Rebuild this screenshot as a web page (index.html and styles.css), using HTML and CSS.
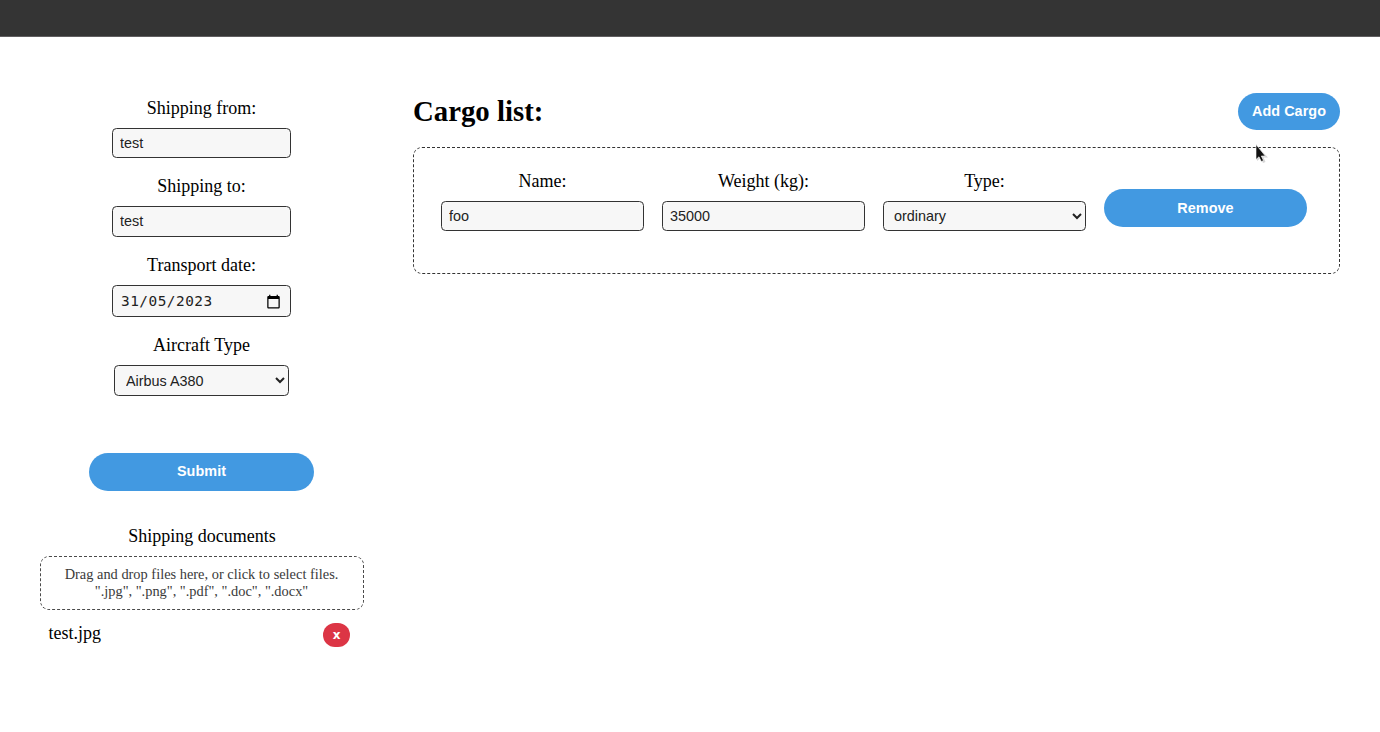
FILE: index.html
```html
<!DOCTYPE html>
<html lang="en">
<head>
<meta charset="utf-8">
<title>Cargo</title>
<link rel="stylesheet" href="styles.css">
</head>
<body>
<header class="topbar"></header>
<main class="page">
  <aside class="sidebar">
    <form class="shipping">
      <label class="field"><span>Shipping from:</span><input class="control" type="text" value="test"></label>
      <label class="field"><span>Shipping to:</span><input class="control control-tall" type="text" value="test"></label>
      <label class="field"><span>Transport date:</span>
        <span class="control date"><span class="date-text">31/05/2023</span>
          <svg class="calendar" viewBox="0 0 24 24"><path d="M20 3h-1V1h-2v2H7V1H5v2H4c-1.100 0-2 .9-2 2v16c0 1.100.9 2 2 2h16c1.100 0 2-.9 2-2V5c0-1.100-.9-2-2-2zm0 18H4V8h16v13z"/></svg>
        </span>
      </label>
      <label class="field"><span>Aircraft Type</span><select class="control aircraft"><option>Airbus A380</option></select></label>
      <button class="button submit" type="button">Submit</button>
    </form>
    <section class="documents">
      <div class="documents-title">Shipping documents</div>
      <div class="dropzone">Drag and drop files here, or click to select files.<br>".jpg", ".png", ".pdf", ".doc", ".docx"</div>
      <div class="file"><span>test.jpg</span><button class="delete" type="button">x</button></div>
    </section>
  </aside>
  <section class="cargo">
    <div class="cargo-head">
      <h1>Cargo list:</h1>
      <button class="button add" type="button">Add Cargo</button>
    </div>
    <div class="cargo-row">
      <label class="field"><span>Name:</span><input class="control" type="text" value="foo"></label>
      <label class="field"><span>Weight (kg):</span><input class="control" type="text" value="35000"></label>
      <label class="field"><span>Type:</span><select class="control"><option>ordinary</option></select></label>
      <button class="button remove" type="button">Remove</button>
    </div>
  </section>
</main>
<svg class="pointer" viewBox="0 0 14 20"><path class="shade" d="M2 2v15l3.500-3 2.500 5 2.500-1-2-4.500H13z"/><path class="arrow" d="M1 .5v15l3-2.700 2.300 4.700 2.200-1-2.200-4.500h4z"/></svg>
</body>
</html>
```
FILE: styles.css
```css
* { box-sizing: border-box; }
body {
  margin: 0;
  background: #fff;
  color: #000;
  font: 18px/20px "Liberation Serif", serif;
}
.topbar {
  height: 37px;
  background: #343434;
  border-bottom: 1px solid #605e60;
}
.page {
  display: flex;
  gap: 49px;
  padding: 56px 40px 0;
}
.sidebar { width: 324px; flex: none; }
.shipping {
  display: flex;
  flex-direction: column;
  align-items: center;
  padding: 5px 1px 0 0;
}
.shipping .field { width: 179px; margin-bottom: 18px; }
.field {
  display: flex;
  flex-direction: column;
  align-items: center;
  gap: 10px;
  text-align: center;
}
.control {
  width: 100%;
  height: 30px;
  margin: 0;
  padding: 0 7px;
  border: 1px solid #333;
  border-radius: 4.500px;
  background: #f7f7f7;
  color: #222;
  font: 14.400px "Liberation Sans", sans-serif;
}
select.control { padding-left: 6px; padding-right: 0; }
select.aircraft { padding-left: 7px; }
.control-tall { height: 31px; padding-bottom: 2px; }
.date {
  height: 32px;
  display: flex;
  align-items: center;
  justify-content: space-between;
  padding: 0 9px 0 8px;
  font-family: "DejaVu Sans Mono", monospace;
}
.date-text { letter-spacing: .5px; }
.calendar { width: 15px; height: 15px; fill: #000; }
.aircraft { width: 175px; height: 31px; }
.button {
  height: 38px;
  padding: 0 0 2px;
  border: 0;
  border-radius: 19px;
  background: #4299e1;
  color: #fff;
  font: bold 14.400px "Liberation Sans", sans-serif;
  letter-spacing: .05px;
}
.submit { width: 225px; margin-top: 39px; }
.documents { margin-top: 35px; }
.documents-title { text-align: center; }
.dropzone {
  height: 54px;
  margin-top: 10px;
  padding: 9px 10px 9px 9px;
  border: 1px dashed #4a4a4a;
  border-radius: 9px;
  color: #3a3a3a;
  font-size: 14.400px;
  line-height: 17px;
  text-align: center;
}
.file {
  display: flex;
  align-items: center;
  justify-content: space-between;
  height: 24px;
  margin-top: 13px;
  padding: 0 14px 0 8.500px;
}
.file span { padding-bottom: 4px; }
.delete {
  width: 27px;
  height: 24px;
  padding: 0;
  border: 0;
  border-radius: 12px;
  background: #dc3545;
  color: #fff;
  font: bold 12px "DejaVu Sans", sans-serif;
}
.cargo { flex: 1; }
.cargo-head {
  display: flex;
  align-items: center;
  justify-content: space-between;
  height: 37px;
}
h1 { margin: 0; font-size: 28.800px; line-height: 33px; }
.add { width: 102px; height: 37px; }
.cargo-row {
  display: grid;
  grid-template-columns: repeat(4, 203px);
  column-gap: 18px;
  height: 127px;
  margin-top: 17px;
  padding: 23px 27px;
  border: 1px dashed #333;
  border-radius: 9px;
}
.remove { margin-top: 18px; padding-bottom: 0; }
.pointer {
  position: absolute;
  left: 1255px;
  top: 144px;
  width: 14px;
  height: 20px;
}
.shade { fill: #999; opacity: .4; }
.arrow { fill: #111; stroke: #fff; stroke-width: .6; }
```
